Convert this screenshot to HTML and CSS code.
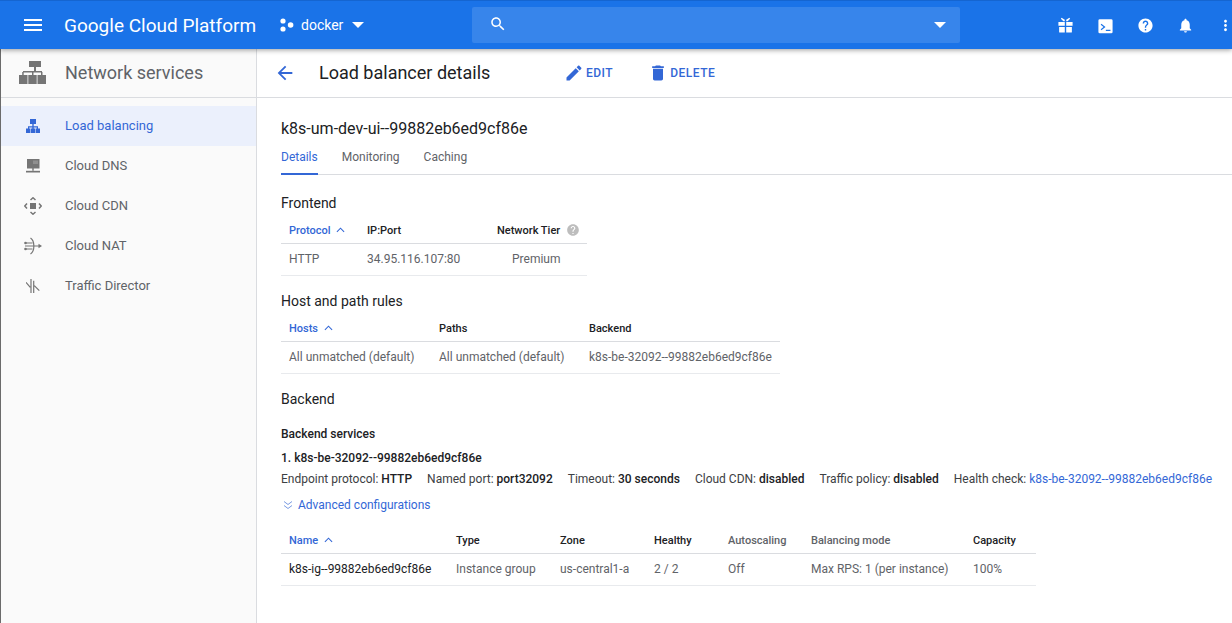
FILE: index.html
```html
<!DOCTYPE html>
<html>
<head>
  <meta charset="utf-8">
  <link rel="stylesheet" href="styles.css">
</head>
<body>
  <header class="topbar">
    <svg class="menu-icon" viewBox="0 0 24 24"><path d="M3 18h18v-2H3v2zm0-5h18v-2H3v2zm0-7v2h18V6H3z"/></svg>
    <span class="logo">Google Cloud Platform</span>
    <div class="project">
      <svg class="project-icon" viewBox="0 0 14 14"><circle cx="3" cy="3" r="2.6"/><circle cx="3" cy="11" r="2.6"/><circle cx="10.6" cy="7" r="2.8"/></svg>
      <span class="project-name">docker</span>
      <span class="caret"></span>
    </div>
    <div class="search">
      <svg class="search-icon" viewBox="0 0 24 24"><path d="M15.5 14h-.79l-.28-.27C15.41 12.59 16 11.11 16 9.5 16 5.91 13.09 3 9.5 3S3 5.91 3 9.5 5.91 16 9.5 16c1.61 0 3.09-.59 4.23-1.57l.27.28v.79l5 4.99L20.49 19l-4.99-5zm-6 0C7.01 14 5 11.99 5 9.5S7.01 5 9.5 5 14 7.01 14 9.5 11.99 14 9.5 14z"/></svg>
      <span class="caret"></span>
    </div>
    <div class="top-actions">
      <svg class="top-icon" viewBox="0 0 24 24"><path d="M2 7h9v5.500H2zM13 7h9v5.500h-9zM3 14h8v8H4a1 1 0 0 1-1-1zM13 14h8v7a1 1 0 0 1-1 1h-7zM5.500 2.500l1-1.500L11 4v2H9zM18.500 2.500l-1-1.500L13 4v2h2z"/></svg>
      <svg class="top-icon" viewBox="0 0 24 24"><path fill-rule="evenodd" d="M4 3h16a2 2 0 0 1 2 2v16a2 2 0 0 1-2 2H4a2 2 0 0 1-2-2V5a2 2 0 0 1 2-2zm1.200 8l4 3.200-4 3.200 1 1.400 5.800-4.600-5.800-4.600zM12.500 18v1.800h6.500V18z"/></svg>
      <svg class="top-icon" viewBox="0 0 24 24"><path d="M12 2C6.480 2 2 6.480 2 12s4.480 10 10 10 10-4.480 10-10S17.520 2 12 2zm1 17h-2v-2h2v2zm2.070-7.750l-.9.920C13.450 12.900 13 13.500 13 15h-2v-.5c0-1.100.45-2.100 1.170-2.830l1.240-1.260c.37-.36.59-.86.59-1.410 0-1.100-.9-2-2-2s-2 .9-2 2H8c0-2.210 1.790-4 4-4s4 1.790 4 4c0 .88-.36 1.680-.93 2.250z"/></svg>
      <svg class="top-icon" viewBox="0 0 24 24"><path d="M12 22c1.100 0 2-.9 2-2h-4c0 1.100.89 2 2 2zm6-6v-5c0-3.070-1.640-5.640-4.500-6.320V4c0-.83-.67-1.500-1.500-1.500s-1.500.67-1.500 1.500v.68C7.630 5.360 6 7.920 6 11v5l-2 2v1h16v-1l-2-2z"/></svg>
      <svg class="top-icon" viewBox="0 0 24 24"><path d="M12 8c1.100 0 2-.9 2-2s-.9-2-2-2-2 .9-2 2 .9 2 2 2zm0 2c-1.100 0-2 .9-2 2s.9 2 2 2 2-.9 2-2-.9-2-2-2zm0 6c-1.100 0-2 .9-2 2s.9 2 2 2 2-.9 2-2-.9-2-2-2z"/></svg>
    </div>
  </header>

  <div class="layout">
    <aside class="sidebar">
      <div class="side-head">
        <svg class="side-head-icon" viewBox="0 0 27 23"><path d="M10 0h12v6H10zM15 6h2v4h-2zM4 10h19v1.500H4zM3.200 11h1.500v3H3.200zM13 11h1.500v3H13zM22 11h1.500v3H22zM0 14h8.500v9H0zM9.300 14h8.400v9H9.300zM18.500 14H27v9h-8.500z"/></svg>
        <span>Network services</span>
      </div>
      <nav class="nav">
        <a class="nav-item active">
          <svg class="nav-icon" viewBox="0 0 14 14"><path d="M4 0h6v5H4zM6.300 5h1.400v2.500H6.300zM2 7.300h10v1.300H2zM2 8h1.200v1.500H2zM10.800 8H12v1.500h-1.200zM6.300 8h1.400v1.500H6.300zM0 9.500h4.300V14H0zM4.850 9.500h4.300V14h-4.300zM9.700 9.500H14V14H9.700z"/></svg>
          <span>Load balancing</span>
        </a>
        <a class="nav-item">
          <svg class="nav-icon" viewBox="0 0 14 14"><path d="M1 0h12.500v9.500H1zM6.300 9.500h1.400v2.300H6.300z"/><path class="notch" d="M7 1.500h5v3.500H7z"/><path d="M0 11.800h14V13.500H0z"/></svg>
          <span>Cloud DNS</span>
        </a>
        <a class="nav-item">
          <svg class="nav-icon wide" viewBox="0 0 18 18"><path d="M6 6h6v6H6z"/><path class="thin heavy" d="M6.500 3 9 .8 11.500 3M6.500 15 9 17.200 11.500 15M3 6.500.8 9 3 11.500M15 6.500 17.200 9 15 11.500"/></svg>
          <span>Cloud CDN</span>
        </a>
        <a class="nav-item">
          <svg class="nav-icon wide" viewBox="0 0 18 18"><path class="thin" d="M6.500 1c4.500 3 4.500 13 0 16M1 6h7.500M1 12h7.500M1 9h14"/><path d="M14.500 6.800 18 9l-3.500 2.200z"/><circle cx="1.500" cy="6" r="1.300"/><circle cx="1.500" cy="12" r="1.300"/></svg>
          <span>Cloud NAT</span>
        </a>
        <a class="nav-item">
          <svg class="nav-icon" viewBox="0 0 14 14"><path class="thin" d="M0 3.300 4.300 8.300M5 0v14M7.700 1.700V14M8.300 6.700 13.300 11.700"/></svg>
          <span>Traffic Director</span>
        </a>
      </nav>
    </aside>

    <main class="content">
      <div class="page-head">
        <svg class="back-icon" viewBox="0 0 24 24"><path d="M20 11H7.830l5.590-5.590L12 4l-8 8 8 8 1.410-1.410L7.830 13H20v-2z"/></svg>
        <h1 class="page-title">Load balancer details</h1>
        <a class="action edit">
          <svg class="action-icon" viewBox="0 0 24 24"><path d="M3 17.250V21h3.750L17.810 9.940l-3.750-3.750L3 17.250zM20.710 7.040c.39-.39.39-1.020 0-1.410l-2.340-2.340c-.39-.39-1.020-.39-1.410 0l-1.830 1.830 3.750 3.750 1.830-1.830z"/></svg>
          EDIT
        </a>
        <a class="action">
          <svg class="action-icon" viewBox="0 0 24 24"><path d="M6 19c0 1.100.9 2 2 2h8c1.100 0 2-.9 2-2V7H6v12zM19 4h-3.500l-1-1h-5l-1 1H5v2h14V4z"/></svg>
          DELETE
        </a>
      </div>

      <div class="details">
        <h2 class="lb-name">k8s-um-dev-ui--99882eb6ed9cf86e</h2>
        <div class="tabs">
          <a class="tab active">Details</a>
          <a class="tab">Monitoring</a>
          <a class="tab">Caching</a>
        </div>

        <h3 class="section-title first">Frontend</h3>
        <table class="data frontend">
          <colgroup><col class="c78"><col class="c130"><col class="c98"></colgroup>
          <thead>
            <tr>
              <th class="sorted">Protocol <svg class="sort-icon" viewBox="0 0 10 6"><path d="M1 5l4-4 4 4"/></svg></th>
              <th>IP:Port</th>
              <th class="tier">Network Tier <svg class="hint-icon" viewBox="0 0 24 24"><path d="M12 2C6.480 2 2 6.480 2 12s4.480 10 10 10 10-4.480 10-10S17.520 2 12 2zm1 17h-2v-2h2v2zm2.070-7.750l-.9.920C13.450 12.900 13 13.500 13 15h-2v-.5c0-1.100.45-2.100 1.170-2.830l1.240-1.260c.37-.36.59-.86.59-1.410 0-1.100-.9-2-2-2s-2 .9-2 2H8c0-2.210 1.790-4 4-4s4 1.790 4 4c0 .88-.36 1.680-.93 2.250z"/></svg></th>
            </tr>
          </thead>
          <tbody>
            <tr><td>HTTP</td><td>34.95.116.107:80</td><td class="tier-val">Premium</td></tr>
          </tbody>
        </table>

        <h3 class="section-title">Host and path rules</h3>
        <table class="data rules">
          <colgroup><col class="c150"><col class="c150"><col class="c199"></colgroup>
          <thead>
            <tr>
              <th class="sorted">Hosts <svg class="sort-icon" viewBox="0 0 10 6"><path d="M1 5l4-4 4 4"/></svg></th>
              <th>Paths</th>
              <th>Backend</th>
            </tr>
          </thead>
          <tbody>
            <tr><td>All unmatched (default)</td><td>All unmatched (default)</td><td>k8s-be-32092--99882eb6ed9cf86e</td></tr>
          </tbody>
        </table>

        <h3 class="section-title">Backend</h3>
        <div class="sub-title">Backend services</div>
        <div class="service-name">1. k8s-be-32092--99882eb6ed9cf86e</div>
        <div class="service-info">
          <span>Endpoint protocol: <b>HTTP</b></span>
          <span>Named port: <b>port32092</b></span>
          <span>Timeout: <b>30 seconds</b></span>
          <span>Cloud CDN: <b>disabled</b></span>
          <span>Traffic policy: <b>disabled</b></span>
          <span>Health check: <a class="link">k8s-be-32092--99882eb6ed9cf86e</a></span>
        </div>
        <a class="advanced">
          <svg class="advanced-icon" viewBox="0 0 10 10"><path d="M1 1.500l4 3 4-3M1 5.500l4 3 4-3"/></svg>
          Advanced configurations
        </a>
        <table class="data backends">
          <colgroup><col class="c167"><col class="c104"><col class="c94"><col class="c74"><col class="c83"><col class="c162"><col class="c71"></colgroup>
          <thead>
            <tr>
              <th class="sorted">Name <svg class="sort-icon" viewBox="0 0 10 6"><path d="M1 5l4-4 4 4"/></svg></th>
              <th>Type</th>
              <th>Zone</th>
              <th>Healthy</th>
              <th class="muted">Autoscaling</th>
              <th class="muted">Balancing mode</th>
              <th>Capacity</th>
            </tr>
          </thead>
          <tbody>
            <tr><td class="strong">k8s-ig--99882eb6ed9cf86e</td><td>Instance group</td><td>us-central1-a</td><td>2 / 2</td><td>Off</td><td>Max RPS: 1 (per instance)</td><td>100%</td></tr>
          </tbody>
        </table>
      </div>
    </main>
  </div>
</body>
</html>
```

FILE: styles.css
```css
* {
  box-sizing: border-box;
}
html, body {
  height: 100%;
}
body {
  margin: 0;
  display: flex;
  flex-direction: column;
  overflow: hidden;
  font-family: Roboto, sans-serif;
  font-size: 12px;
  color: #202124;
  background-color: #fff;
}

/* top bar */
.topbar {
  position: relative;
  z-index: 2;
  flex: none;
  display: flex;
  align-items: center;
  height: 49px;
  padding: 0 0 0 21px;
  border-top: 1px solid #1565d0;
  background-color: #1a73e8;
  box-shadow: 0 1px 5px rgba(0, 0, 0, 0.4);
  color: #fff;
}
.topbar > * {
  flex: none;
}
.topbar svg {
  fill: #fff;
}
.menu-icon {
  width: 24px;
  height: 24px;
}
.logo {
  margin-left: 19px;
  width: 216px;
  font-size: 19px;
  color: #fff;
  white-space: nowrap;
}
.project {
  display: flex;
  align-items: center;
  width: 192px;
}
.project-icon {
  width: 14px;
  height: 14px;
}
.project-name {
  margin-left: 7px;
  font-size: 14px;
}
.caret {
  width: 0;
  height: 0;
  border-left: 6px solid transparent;
  border-right: 6px solid transparent;
  border-top: 6px solid #fff;
}
.project .caret {
  margin-left: 9px;
}
.search {
  display: flex;
  align-items: center;
  justify-content: space-between;
  width: 488px;
  height: 36px;
  padding: 0 14px 0 17px;
  border-radius: 2px;
  background-color: rgba(255, 255, 255, 0.13);
}
.search-icon {
  width: 18px;
  height: 18px;
  margin-top: -3px;
}
.top-actions {
  display: flex;
  align-items: center;
  gap: 23px;
  margin-left: 97px;
}
.top-icon {
  flex: none;
  width: 17px;
  height: 17px;
}

/* sidebar */
.layout {
  flex: 1;
  display: flex;
  min-height: 0;
}
.sidebar {
  flex: none;
  width: 257px;
  border-left: 1px solid #6b6b6b;
  border-right: 1px solid #dadce0;
  background-color: #fafafa;
}
.side-head {
  display: flex;
  align-items: center;
  height: 49px;
  padding: 0 0 1px 18px;
  border-bottom: 1px solid #dadce0;
  font-size: 18px;
  color: #5f6368;
}
.side-head-icon {
  width: 27px;
  height: 23px;
  margin-right: 19px;
  fill: #757575;
}
.nav {
  padding-top: 8px;
}
.nav-item {
  display: flex;
  align-items: center;
  height: 40px;
  padding: 0 0 1px 25px;
  font-size: 13px;
  color: #5f6368;
}
.nav-item.active {
  background-color: #ebf0fc;
  color: #3367d6;
}
.nav-icon {
  flex: none;
  width: 14px;
  height: 14px;
  margin-right: 25px;
  fill: #757575;
}
.nav-icon.wide {
  width: 18px;
  height: 18px;
  margin-left: -2px;
  margin-right: 23px;
}
.nav-icon .thin {
  fill: none;
  stroke: #757575;
  stroke-width: 1.2;
}
.nav-icon .thin.heavy {
  stroke-width: 1.5;
}
.nav-icon .notch {
  fill: #8f8f8f;
}
.nav-item.active .nav-icon {
  fill: #3367d6;
}

/* page head */
.content {
  flex: 1;
  min-width: 0;
}
.page-head {
  display: flex;
  align-items: center;
  height: 49px;
  padding: 0 0 1px 17px;
  border-bottom: 1px solid #dadce0;
}
.back-icon {
  width: 22px;
  height: 22px;
  fill: #3367d6;
}
.page-title {
  margin: 0 73px 0 23px;
  width: 172px;
  font-size: 18px;
  font-weight: 400;
  color: #202124;
  white-space: nowrap;
}
.action {
  display: flex;
  align-items: center;
  font-size: 12px;
  font-weight: 500;
  letter-spacing: 0.5px;
  color: #3367d6;
}
.action.edit {
  margin-right: 35px;
}
.action-icon {
  width: 20px;
  height: 20px;
  margin-right: 2px;
  fill: #3367d6;
}

/* details */
.details {
  padding: 22px 0 0 24px;
}
.lb-name {
  margin: 0;
  font-size: 16px;
  line-height: 18px;
  font-weight: 400;
  color: #202124;
}
.tabs {
  display: flex;
  gap: 24px;
  height: 32px;
  margin-top: 5px;
  border-bottom: 1px solid #dadce0;
}
.tab {
  height: 32px;
  padding-top: 7px;
  font-size: 12px;
  color: #5f6368;
}
.tab.active {
  border-bottom: 2px solid #3367d6;
  color: #3367d6;
}
.section-title {
  margin: 16px 0 0;
  font-size: 14px;
  line-height: 18px;
  font-weight: 400;
  color: #202124;
}
.section-title.first {
  margin-top: 19px;
}

/* tables */
.data {
  table-layout: fixed;
  border-collapse: collapse;
  margin-top: 5px;
}
.frontend {
  width: 306px;
}
.rules {
  width: 499px;
  margin-top: 6px;
}
.rules td {
  padding-bottom: 2px;
}
.backends {
  width: 755px;
  margin-top: 14px;
}
.c78 { width: 78px; }
.c130 { width: 130px; }
.c98 { width: 98px; }
.c150 { width: 150px; }
.c199 { width: 199px; }
.c167 { width: 167px; }
.c104 { width: 104px; }
.c94 { width: 94px; }
.c74 { width: 74px; }
.c83 { width: 83px; }
.c162 { width: 162px; }
.c71 { width: 71px; }
.data th {
  height: 26px;
  padding: 1px 8px 0;
  border-bottom: 1px solid #dadce0;
  font-size: 11px;
  font-weight: 500;
  text-align: left;
  color: #202124;
  white-space: nowrap;
}
.data td {
  height: 32px;
  padding-left: 8px;
  padding-right: 8px;
  border-bottom: 1px solid #e8eaed;
  font-size: 12px;
  color: #5f6368;
  white-space: nowrap;
}
.data th.sorted {
  color: #3367d6;
}
.data th.muted {
  color: #5f6368;
}
.data td.strong {
  color: #202124;
}
.sort-icon {
  width: 9px;
  height: 6px;
  margin-left: 3px;
  vertical-align: 1px;
  fill: none;
  stroke: #3367d6;
  stroke-width: 1.2;
}
.data td.tier-val {
  padding-left: 23px;
}
.hint-icon {
  width: 14px;
  height: 14px;
  margin-left: 3px;
  vertical-align: -3px;
  fill: #bdbdbd;
}

/* backend service */
.sub-title {
  margin-top: 18px;
  font-size: 12px;
  line-height: 16px;
  font-weight: 500;
  color: #202124;
}
.service-name {
  margin-top: 8px;
  font-size: 12px;
  line-height: 16px;
  font-weight: 500;
  color: #202124;
}
.service-info {
  display: flex;
  gap: 15px;
  margin-top: 5px;
  line-height: 16px;
  color: #3c4043;
  white-space: nowrap;
}
.service-info b {
  font-weight: 500;
  color: #202124;
}
.link {
  color: #3367d6;
}
.advanced {
  display: flex;
  align-items: center;
  margin-top: 10px;
  line-height: 16px;
  color: #3367d6;
}
.advanced-icon {
  width: 10px;
  height: 10px;
  margin: 0 5px 0 2px;
  fill: none;
  stroke: #7a9be3;
  stroke-width: 1;
}
```
